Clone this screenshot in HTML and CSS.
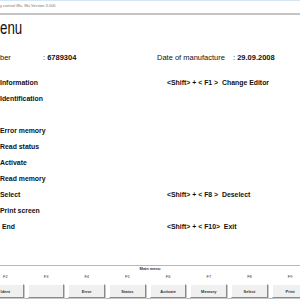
FILE: index.html
```html
<!DOCTYPE html>
<html>

<head>
    <title>Main menu</title>
    <meta charset='utf-8'>
    <link rel="stylesheet" href="styles.css">
</head>

<body>
    <div id='titlebar'>y control IBs, IBs Version 3.000</div>

    <div id='title'>enu</div>

    <div id='header'>
        <div>ber</div>
        <div class='value'>: <b>6789304</b></div>
        <div>Date of manufacture</div>
        <div class='value'>: <b>29.09.2008</b></div>
    </div>

    <div id='menu'>
        <div class='item'>Information</div>
        <div class='key'>&lt;Shift&gt; + &lt; F1 &gt;  Change Editor</div>
        <div class='item'>Identification</div>
        <div></div>
        <div class='item'></div>
        <div></div>
        <div class='item'>Error memory</div>
        <div></div>
        <div class='item'>Read status</div>
        <div></div>
        <div class='item'>Activate</div>
        <div></div>
        <div class='item'>Read memory</div>
        <div></div>
        <div class='item'>Select</div>
        <div class='key'>&lt;Shift&gt; + &lt; F8 &gt;  Deselect</div>
        <div class='item'>Print screen</div>
        <div></div>
        <div class='item end'>End</div>
        <div class='key'>&lt;Shift&gt; + &lt; F10&gt;  Exit</div>
    </div>

    <div id='footer'>
        <div id='footTitle'>Main menu</div>
        <div id='fkeys'>
            <div class='fkey'><span>F2</span><button>Ident</button></div>
            <div class='fkey'><span>F3</span><button></button></div>
            <div class='fkey'><span>F4</span><button>Error</button></div>
            <div class='fkey'><span>F5</span><button>Status</button></div>
            <div class='fkey'><span>F6</span><button>Activate</button></div>
            <div class='fkey'><span>F7</span><button>Memory</button></div>
            <div class='fkey'><span>F8</span><button>Select</button></div>
            <div class='fkey'><span>F9</span><button>Print</button></div>
        </div>
    </div>
</body>

</html>
```

FILE: styles.css
```css
body {
    padding: 0px;
    margin: 0px;
    width: 300px;
    height: 300px;
    overflow: hidden;
    background: white;
    color: #111;
    font-family: "Liberation Sans", Arial, sans-serif
}

#titlebar {
    height: 12px;
    border-top: 1px solid #d4e5f6;
    border-bottom: 2px solid #c4c4c4;
    font-size: 4px;
    line-height: 10px;
    color: #777;
    white-space: nowrap
}

#title {
    margin-top: 3px;
    font-size: 18px;
    line-height: 20px;
    transform: scaleX(0.74);
    transform-origin: left
}

#header {
    display: grid;
    grid-template-columns: 43px 114px 76px auto;
    margin-top: 15px;
    font-size: 7.5px;
    line-height: 10px;
    white-space: nowrap
}

#menu {
    display: grid;
    grid-template-columns: 167px auto;
    grid-auto-rows: 16px;
    margin-top: 12px;
    font-size: 6.9px;
    line-height: 16px;
    font-weight: bold;
    white-space: pre
}

.end {
    margin-left: 2px
}

#footer {
    margin-top: 30px;
    border-top: 1px solid #b8b8b8;
    border-bottom: 1px solid #a4b6c8;
    height: 32px
}

#footTitle {
    text-align: center;
    font-size: 4px;
    line-height: 6px;
    font-weight: bold;
    color: #333
}

#fkeys {
    display: grid;
    grid-template-columns: repeat(8, 36.7px);
    column-gap: 4px;
    margin-left: -13px
}

.fkey {
    display: flex;
    flex-direction: column;
    align-items: center
}

.fkey span {
    font-size: 4px;
    line-height: 6px;
    margin-top: 2px;
    margin-bottom: 4px;
    color: #333
}

.fkey button {
    width: 100%;
    height: 14px;
    padding: 0px;
    background: #f0f0f0;
    border: 1px solid;
    border-color: #fff #8a8a8a #8a8a8a #fff;
    box-shadow: 1px 1px 0 #c8c8c8;
    font-family: "Liberation Sans", Arial, sans-serif;
    font-size: 4px;
    font-weight: bold;
    color: #333
}
```
